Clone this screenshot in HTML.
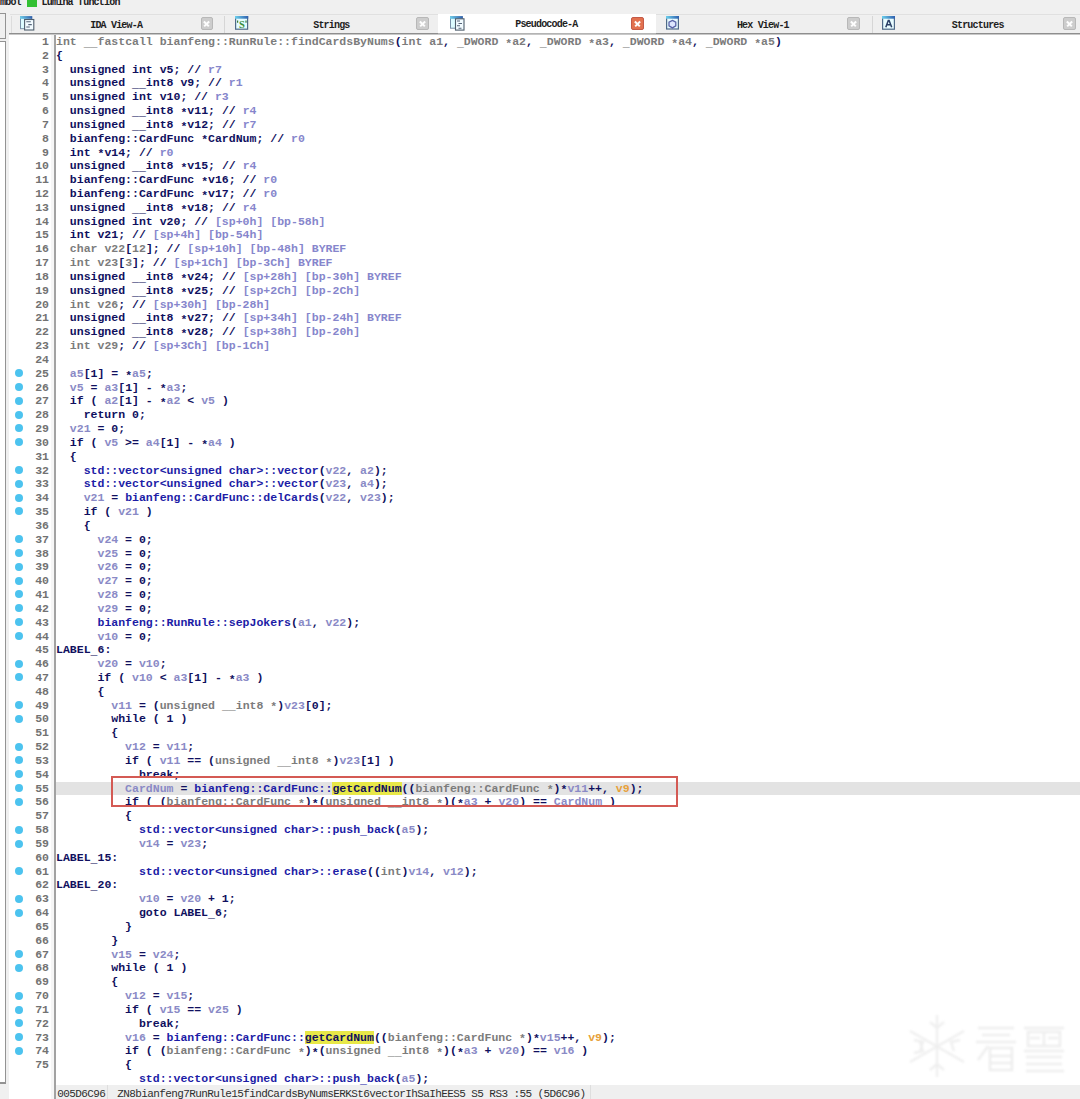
<!DOCTYPE html>
<html><head><meta charset="utf-8">
<style>
html,body{margin:0;padding:0}
body{width:1080px;height:1099px;position:relative;overflow:hidden;background:#f0f0f0;font-family:"Liberation Mono",monospace}
.a{position:absolute}
#legend{position:absolute;left:0;top:-3px;font:bold 10px/12px "Liberation Mono",monospace;letter-spacing:-0.8px;color:#202020;white-space:pre}
#lgsq{position:absolute;left:27px;top:0;width:10px;height:7px;background:#33c033}
#lp1{position:absolute;left:-2px;top:13px;width:6px;height:24px;border:1px solid #939393;background:#f0f0f0}
#lp2{position:absolute;left:-2px;top:41px;width:6px;height:1024px;border:1px solid #939393;border-bottom-width:2px;background:#fff}
#lp3{position:absolute;left:-2px;top:1066px;width:6px;height:16px;border:1px solid #939393;border-top:none;border-bottom-width:2px;background:#fff}
#tabbar{position:absolute;left:10.5px;top:15.5px;width:1069.5px;height:17.5px;background:#efefef;border-left:1px solid #dcdcdc;box-sizing:border-box}
.sep{position:absolute;top:15.5px;width:1px;height:18px;background:#d6d6d6}
#acttab{position:absolute;left:438.3px;top:13.5px;width:217.7px;height:20.5px;background:#fff}
#tabline{position:absolute;left:9px;top:33px;width:1071px;height:1px;background:#8e8e8e;box-shadow:0 1px 0 #c8c8c8}
#tablineact{position:absolute;left:438.3px;top:33px;width:217.7px;height:1px;background:#b4b4b4}
.tt{position:absolute;top:19.8px;font-weight:bold;font:bold 10px/12px "Liberation Mono",monospace;letter-spacing:-0.81px;color:#1e1e1e;white-space:pre}
.cl{position:absolute;top:17px;width:10.5px;height:10.8px;border-radius:2px;background:#cdcdcd;border:1px solid #b8b8b8}
.cl.act{background:#e2714f;border-color:#c45a48}
.cl::before,.cl::after{content:"";position:absolute;left:1.8px;top:4.6px;width:7px;height:1.5px;background:#fdfdfd;transform:rotate(45deg)}
.cl::after{transform:rotate(-45deg)}
.ic{position:absolute;width:15px;height:15px}
#codebg{position:absolute;left:9px;top:34.5px;width:1071px;height:1065px;background:#fff}
#gutsep{position:absolute;left:54px;top:34.5px;width:1.5px;height:1065px;background:#a2a2a2}
#gutstrip{position:absolute;left:50.5px;top:34.5px;width:3.5px;height:1065px;background:#f6f6f6}
#hl{position:absolute;left:55px;top:782.04px;width:1025px;height:13px;background:#e3e3e3}
#nums{position:absolute;left:0;top:34.9px;width:49px;text-align:right;font:bold 11.52px/13.836px "Liberation Mono",monospace;color:#727272;white-space:pre}
#code{position:absolute;left:56.0px;top:34.9px;font:bold 11.52px/13.836px "Liberation Mono",monospace;color:#10105e;white-space:pre}
#code div,#nums div{height:13.836px}
g{color:#7c7c7c}
v{color:#8a8ac6}
c{color:#8686cc}
f{color:#1c1ca6}
o{color:#e7a13a}
y{background:#e8e848;color:#10105e}
u{text-decoration:none;position:relative;top:1.8px}
s{text-decoration:none;position:relative;top:1.8px}
.dot{position:absolute;left:15px;width:8px;height:8px;border-radius:50%;background:#4cc3ef}
#redbox{position:absolute;left:110.6px;top:776px;width:563px;height:26.6px;border:2px solid #d45a54}
#status{position:absolute;left:55px;top:1084.5px;width:1025px;height:14.5px;background:#efefef}
#st1{position:absolute;left:55px;top:1084.5px;width:52px;height:14.5px;border-right:1px solid #dedede}
#st2{position:absolute;left:108px;top:1084.5px;width:482px;height:14.5px;border-right:1px solid #dedede}
#sttext{position:absolute;left:57.3px;top:1087.7px;font:11px/12px "Liberation Mono",monospace;letter-spacing:-0.6px;color:#2e2e2e;white-space:pre}
#wm{position:absolute;left:900px;top:1010px;width:180px;height:75px;filter:blur(0.8px)}
</style></head><body>
<div id="legend">mbol    Lumina function</div>
<div id="lgsq"></div>
<div id="lp1"></div><div id="lp2"></div><div id="lp3"></div>

<div id="tabbar"></div>
<div class="a" style="left:10px;top:14px;width:1070px;height:1px;background:#e0e0e0"></div>
<div class="sep" style="left:224.4px"></div>
<div class="sep" style="left:871.7px"></div>
<div id="acttab"></div>
<div id="tabline"></div>
<div id="tablineact"></div>

<div class="tt" style="left:90.2px">IDA View-A</div>
<div class="tt" style="left:313.2px">Strings</div>
<div class="tt" style="left:515.2px;top:19px">Pseudocode-A</div>
<div class="tt" style="left:736.9px">Hex View-1</div>
<div class="tt" style="left:951.8px">Structures</div>

<div class="cl" style="left:200.5px"></div>
<div class="cl" style="left:416px"></div>
<div class="cl act" style="left:631px"></div>
<div class="cl" style="left:847px"></div>
<div class="cl" style="left:1063px"></div>

<svg width="0" height="0" style="position:absolute"><defs><linearGradient id="tg" x1="0" x2="1" y1="0" y2="0"><stop offset="0" stop-color="#6cd0ec"/><stop offset="1" stop-color="#2f5fae"/></linearGradient></defs></svg>
<svg class="ic" style="left:20px;top:16px" viewBox="0 0 15 15"><rect x="0.5" y="0.7" width="11.2" height="12" fill="#dcfbff" stroke="#7890a8"/><rect x="0" y="0.2" width="12.2" height="2.6" fill="url(#tg)"/><rect x="4.6" y="3.5" width="9.2" height="10.5" fill="#f2fbff" stroke="#4e5d6c" stroke-width="1.1"/><path d="M6.3 5.8h4.5M8.3 8.6h3.5M6.3 11h3.5" stroke="#56657a" stroke-width="1.1"/></svg>
<svg class="ic" style="left:235px;top:16px" viewBox="0 0 15 15"><rect x="0.6" y="0.6" width="12" height="12.6" fill="#e4fcff" stroke="#4f6a88" stroke-width="1.2"/><rect x="0" y="0" width="13.2" height="2.7" fill="url(#tg)"/><path d="M2.6 4.5v2.3M11 4.5v2.3" stroke="#3a7a3a" stroke-width="1.2"/><text x="6.9" y="12.2" font-family="Liberation Serif" font-weight="bold" font-size="10.5" text-anchor="middle" fill="#3c8c3c">S</text></svg>
<svg class="ic" style="left:450px;top:15.7px" viewBox="0 0 15 15"><rect x="0.5" y="0.7" width="11.8" height="11.5" fill="#dcfbff" stroke="#7890a8"/><rect x="0" y="0.2" width="12.8" height="2.6" fill="url(#tg)"/><rect x="5.5" y="2.8" width="8.5" height="11.3" fill="#f2fbff" stroke="#4e5d6c" stroke-width="1.1"/><path d="M7 5h3M8.5 7.5h3.5M7 9.8h3M8.5 12.2h3" stroke="#56657a" stroke-width="1.1"/></svg>
<svg class="ic" style="left:666px;top:16px" viewBox="0 0 15 15"><rect x="0.6" y="0.6" width="11.8" height="12.4" fill="#e8faff" stroke="#4f6a88" stroke-width="1.2"/><rect x="0" y="0" width="13" height="2.7" fill="url(#tg)"/><path d="M6.4 4.4l3.4 1.7v3.8l-3.4 2-3.4-2V6.1z" fill="#dde6ff" stroke="#5a64a8" stroke-width="1.3"/></svg>
<svg class="ic" style="left:882px;top:16px" viewBox="0 0 15 15"><rect x="0.6" y="0.6" width="11.8" height="12.6" fill="#e8fcff" stroke="#4f6a88" stroke-width="1.2"/><rect x="0" y="0" width="13" height="2.7" fill="url(#tg)"/><path d="M3.8 11.2L6.3 4.4h0.8l2.6 6.8M5 8.8h3.6" fill="none" stroke="#2a3f66" stroke-width="1.5"/></svg>

<div id="codebg"></div>
<div id="gutstrip"></div>
<div id="hl"></div>
<i class="dot" style="top:369.08px"></i>
<i class="dot" style="top:382.92px"></i>
<i class="dot" style="top:396.75px"></i>
<i class="dot" style="top:410.59px"></i>
<i class="dot" style="top:424.43px"></i>
<i class="dot" style="top:438.26px"></i>
<i class="dot" style="top:465.93px"></i>
<i class="dot" style="top:479.77px"></i>
<i class="dot" style="top:493.61px"></i>
<i class="dot" style="top:507.44px"></i>
<i class="dot" style="top:535.11px"></i>
<i class="dot" style="top:548.95px"></i>
<i class="dot" style="top:562.79px"></i>
<i class="dot" style="top:576.62px"></i>
<i class="dot" style="top:590.46px"></i>
<i class="dot" style="top:604.29px"></i>
<i class="dot" style="top:618.13px"></i>
<i class="dot" style="top:631.97px"></i>
<i class="dot" style="top:659.64px"></i>
<i class="dot" style="top:673.47px"></i>
<i class="dot" style="top:701.15px"></i>
<i class="dot" style="top:714.98px"></i>
<i class="dot" style="top:742.65px"></i>
<i class="dot" style="top:756.49px"></i>
<i class="dot" style="top:770.33px"></i>
<i class="dot" style="top:784.16px"></i>
<i class="dot" style="top:798.00px"></i>
<i class="dot" style="top:825.67px"></i>
<i class="dot" style="top:839.51px"></i>
<i class="dot" style="top:867.18px"></i>
<i class="dot" style="top:894.85px"></i>
<i class="dot" style="top:908.69px"></i>
<i class="dot" style="top:950.19px"></i>
<i class="dot" style="top:964.03px"></i>
<i class="dot" style="top:991.70px"></i>
<i class="dot" style="top:1005.54px"></i>
<i class="dot" style="top:1019.37px"></i>
<i class="dot" style="top:1033.21px"></i>
<i class="dot" style="top:1047.05px"></i>
<div id="nums"><div>1</div><div>2</div><div>3</div><div>4</div><div>5</div><div>6</div><div>7</div><div>8</div><div>9</div><div>10</div><div>11</div><div>12</div><div>13</div><div>14</div><div>15</div><div>16</div><div>17</div><div>18</div><div>19</div><div>20</div><div>21</div><div>22</div><div>23</div><div>24</div><div>25</div><div>26</div><div>27</div><div>28</div><div>29</div><div>30</div><div>31</div><div>32</div><div>33</div><div>34</div><div>35</div><div>36</div><div>37</div><div>38</div><div>39</div><div>40</div><div>41</div><div>42</div><div>43</div><div>44</div><div>45</div><div>46</div><div>47</div><div>48</div><div>49</div><div>50</div><div>51</div><div>52</div><div>53</div><div>54</div><div>55</div><div>56</div><div>57</div><div>58</div><div>59</div><div>60</div><div>61</div><div>62</div><div>63</div><div>64</div><div>65</div><div>66</div><div>67</div><div>68</div><div>69</div><div>70</div><div>71</div><div>72</div><div>73</div><div>74</div><div>75</div></div>
<div id="code"><div><g>int <u>_</u><u>_</u>fastcall bianfeng::RunRule::findCardsByNums</g>(<g>int a1</g>, <g><u>_</u>DWORD <s>*</s>a2</g>, <g><u>_</u>DWORD <s>*</s>a3</g>, <g><u>_</u>DWORD <s>*</s>a4</g>, <g><u>_</u>DWORD <s>*</s>a5</g>)</div><div>{</div><div>  unsigned int v5; // <c>r7</c></div><div>  unsigned <u>_</u><u>_</u>int8 v9; // <c>r1</c></div><div>  unsigned int v10; // <c>r3</c></div><div>  unsigned <u>_</u><u>_</u>int8 <s>*</s>v11; // <c>r4</c></div><div>  unsigned <u>_</u><u>_</u>int8 <s>*</s>v12; // <c>r7</c></div><div>  bianfeng::CardFunc <s>*</s>CardNum; // <c>r0</c></div><div>  int <s>*</s>v14; // <c>r0</c></div><div>  unsigned <u>_</u><u>_</u>int8 <s>*</s>v15; // <c>r4</c></div><div>  bianfeng::CardFunc <s>*</s>v16; // <c>r0</c></div><div>  bianfeng::CardFunc <s>*</s>v17; // <c>r0</c></div><div>  unsigned <u>_</u><u>_</u>int8 <s>*</s>v18; // <c>r4</c></div><div>  unsigned int v20; // <c>[sp+0h] [bp-58h]</c></div><div>  int v21; // <c>[sp+4h] [bp-54h]</c></div><div>  <g>char v22</g>[<g>12</g>]; // <c>[sp+10h] [bp-48h] BYREF</c></div><div>  <g>int v23</g>[<g>3</g>]; // <c>[sp+1Ch] [bp-3Ch] BYREF</c></div><div>  unsigned <u>_</u><u>_</u>int8 <s>*</s>v24; // <c>[sp+28h] [bp-30h] BYREF</c></div><div>  unsigned <u>_</u><u>_</u>int8 <s>*</s>v25; // <c>[sp+2Ch] [bp-2Ch]</c></div><div>  <g>int v26</g>; // <c>[sp+30h] [bp-28h]</c></div><div>  unsigned <u>_</u><u>_</u>int8 <s>*</s>v27; // <c>[sp+34h] [bp-24h] BYREF</c></div><div>  unsigned <u>_</u><u>_</u>int8 <s>*</s>v28; // <c>[sp+38h] [bp-20h]</c></div><div>  <g>int v29</g>; // <c>[sp+3Ch] [bp-1Ch]</c></div><div>&nbsp;</div><div>  <v>a5</v>[1] = <s>*</s><v>a5</v>;</div><div>  <v>v5</v> = <v>a3</v>[1] - <s>*</s><v>a3</v>;</div><div>  if ( <v>a2</v>[1] - <s>*</s><v>a2</v> &lt; <v>v5</v> )</div><div>    return 0;</div><div>  <v>v21</v> = 0;</div><div>  if ( <v>v5</v> &gt;= <v>a4</v>[1] - <s>*</s><v>a4</v> )</div><div>  {</div><div>    <f>std::vector&lt;unsigned char&gt;::vector</f>(<v>v22</v>, <v>a2</v>);</div><div>    <f>std::vector&lt;unsigned char&gt;::vector</f>(<v>v23</v>, <v>a4</v>);</div><div>    <v>v21</v> = <f>bianfeng::CardFunc::delCards</f>(<v>v22</v>, <v>v23</v>);</div><div>    if ( <v>v21</v> )</div><div>    {</div><div>      <v>v24</v> = 0;</div><div>      <v>v25</v> = 0;</div><div>      <v>v26</v> = 0;</div><div>      <v>v27</v> = 0;</div><div>      <v>v28</v> = 0;</div><div>      <v>v29</v> = 0;</div><div>      <f>bianfeng::RunRule::sepJokers</f>(<v>a1</v>, <v>v22</v>);</div><div>      <v>v10</v> = 0;</div><div>LABEL<u>_</u>6:</div><div>      <v>v20</v> = <v>v10</v>;</div><div>      if ( <v>v10</v> &lt; <v>a3</v>[1] - <s>*</s><v>a3</v> )</div><div>      {</div><div>        <v>v11</v> = (<g>unsigned <u>_</u><u>_</u>int8 <s>*</s></g>)<v>v23</v>[0];</div><div>        while ( 1 )</div><div>        {</div><div>          <v>v12</v> = <v>v11</v>;</div><div>          if ( <v>v11</v> == (<g>unsigned <u>_</u><u>_</u>int8 <s>*</s></g>)<v>v23</v>[1] )</div><div>            break;</div><div>          <v>CardNum</v> = <f>bianfeng::CardFunc::</f><y>getCardNum</y>((<g>bianfeng::CardFunc <s>*</s></g>)<s>*</s><v>v11</v>++, <o>v9</o>);</div><div>          if ( (<g>bianfeng::CardFunc <s>*</s></g>)<s>*</s>(<g>unsigned <u>_</u><u>_</u>int8 <s>*</s></g>)(<s>*</s><v>a3</v> + <v>v20</v>) == <v>CardNum</v> )</div><div>          {</div><div>            <f>std::vector&lt;unsigned char&gt;::push<u>_</u>back</f>(<v>a5</v>);</div><div>            <v>v14</v> = <v>v23</v>;</div><div>LABEL<u>_</u>15:</div><div>            <f>std::vector&lt;unsigned char&gt;::erase</f>((<g>int</g>)<v>v14</v>, <v>v12</v>);</div><div>LABEL<u>_</u>20:</div><div>            <v>v10</v> = <v>v20</v> + 1;</div><div>            goto LABEL<u>_</u>6;</div><div>          }</div><div>        }</div><div>        <v>v15</v> = <v>v24</v>;</div><div>        while ( 1 )</div><div>        {</div><div>          <v>v12</v> = <v>v15</v>;</div><div>          if ( <v>v15</v> == <v>v25</v> )</div><div>            break;</div><div>          <v>v16</v> = <f>bianfeng::CardFunc::</f><y>getCardNum</y>((<g>bianfeng::CardFunc <s>*</s></g>)<s>*</s><v>v15</v>++, <o>v9</o>);</div><div>          if ( (<g>bianfeng::CardFunc <s>*</s></g>)<s>*</s>(<g>unsigned <u>_</u><u>_</u>int8 <s>*</s></g>)(<s>*</s><v>a3</v> + <v>v20</v>) == <v>v16</v> )</div><div>          {</div><div>            <f>std::vector&lt;unsigned char&gt;::push<u>_</u>back</f>(<v>a5</v>);</div></div>
<div id="redbox"></div>

<svg id="wm" viewBox="0 0 180 75">
<g fill="none" stroke="#efefef" stroke-width="2.4">
<path d="M37 5v62M10 21l54 31M10 52l54-31"/>
<path d="M30 12l7 6 7-6M30 60l7-6 7 6M14 30l9 2-3 9M60 30l-9 2 3 9M14 43l9-2-3-9"/>
</g>
<g fill="none" stroke="#eeeeee" stroke-width="2.6">
<path d="M78 18h36M82 25h28M76 32h40M88 36l-10 14M90 38h22v22H90zM90 46h22M90 53h22"/>
<path d="M124 18h40M128 22h32v14h-32zM144 22v14M130 28h10M148 28h10M124 41h40M126 47h36M126 54h36M126 61h38"/>
</g>
</svg>

<div id="status"></div>
<div id="st1"></div><div id="st2"></div>
<div id="gutsep"></div>
<div id="sttext">005D6C96  ZN8bianfeng7RunRule15findCardsByNumsERKSt6vectorIhSaIhEES5 S5 RS3 :55 (5D6C96)</div>
</body></html>
